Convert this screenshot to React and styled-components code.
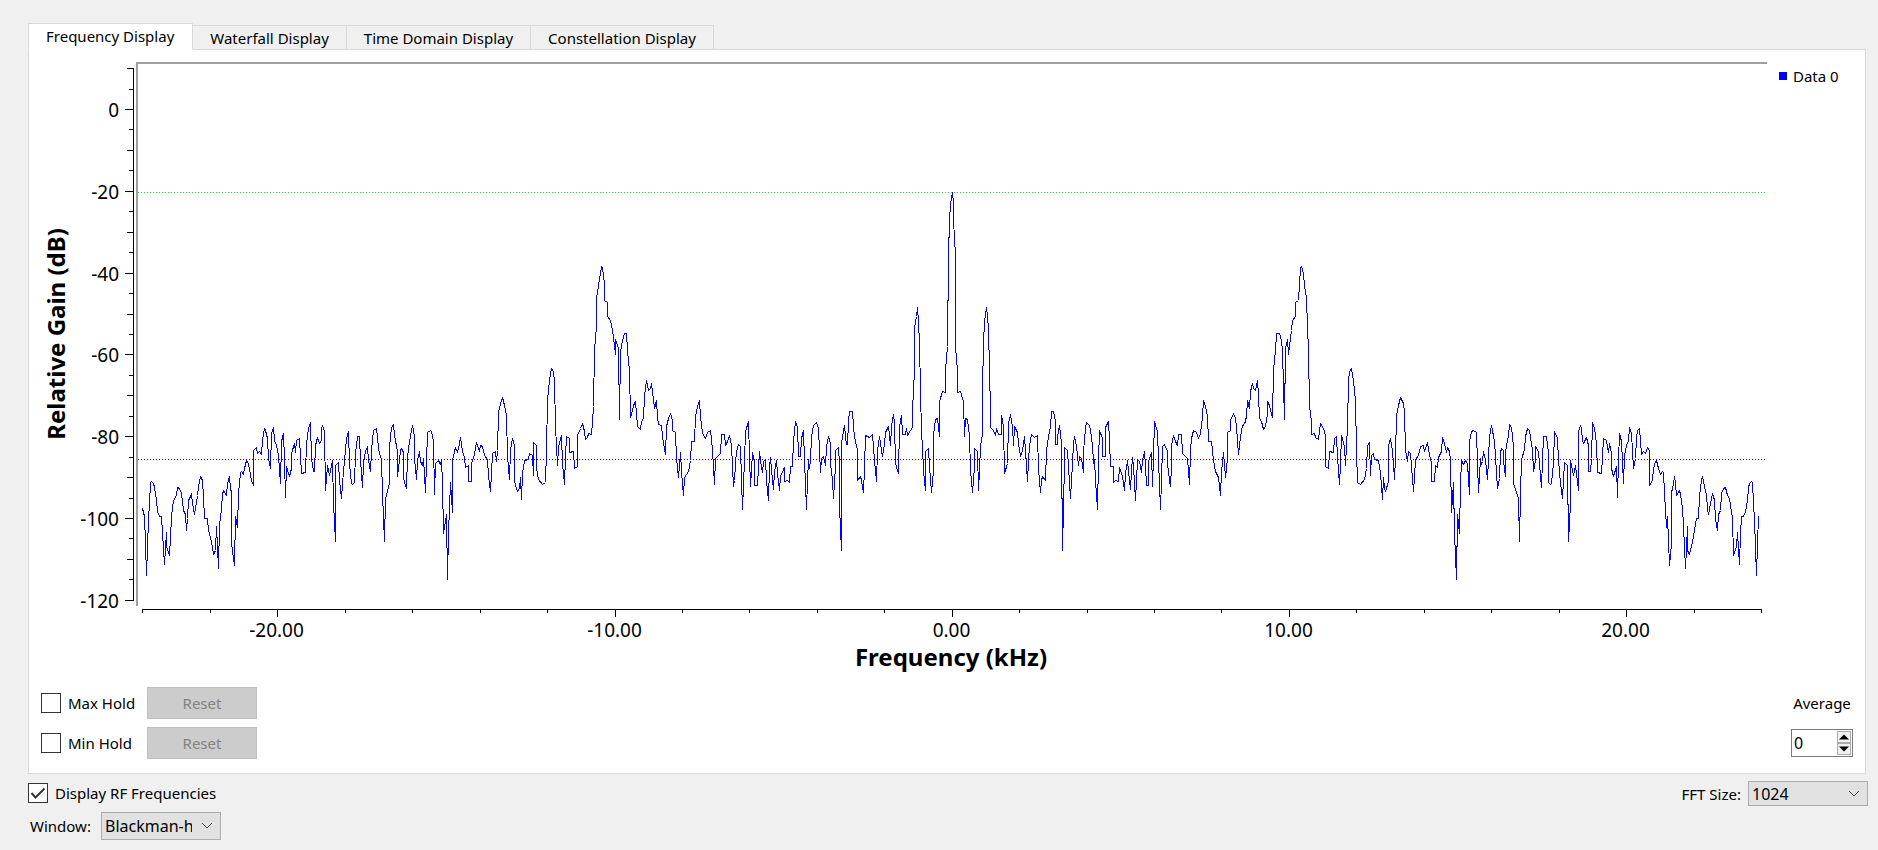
import { useState } from "react";
import styled, { createGlobalStyle } from "styled-components";

const TABS = [
  "Frequency Display",
  "Waterfall Display",
  "Time Domain Display",
  "Constellation Display",
];

const CENTER_X = 951.7;
const PX_PER_KHZ = 33.72;
const ZERO_Y = 109.5;
const PX_PER_DB = 4.09;
const UNIT = 3;

// negative half of the spectrum, in thirds of a pixel from each sweep's origin
const SWEEPS = [
  {
    x: 130,
    y: 400,
    points:
      "37,325 43,349 46,430 50,526 55,357 59,310 62,246 65,244 70,249 73,262 78,300 82,335 88,349 94,349 98,400 102,492 108,397 110,440 118,467 123,356 127,315 132,295 138,287 143,263 149,264 154,280 159,330 165,343 168,390 173,355 176,300 180,290 183,280 187,310 193,344 197,325 201,285 206,260 211,229 216,240 220,290 224,354 231,356 235,390 243,425 250,463 256,452 258,380 264,504 269,375 273,325 277,283 281,271 289,286 292,250 297,230 301,268 304,275 305,430 312,495 316,349 321,381 325,280 330,217 333,215 339,224 344,205 349,180 353,185 358,205 363,240 370,256 371,152 378,143 382,161 388,155 394,163 398,120 402,86 406,90 411,115 414,175 420,205 424,100 430,83 434,120 440,137 445,165 450,249 454,125 460,100 463,180 467,292 470,200 478,229 484,205 485,160 492,131 495,156 499,120 508,115 511,170 515,219 526,217 529,130 535,85 542,67 545,175 549,215 553,213 555,135 561,112 568,129 573,122 574,85 578,77 584,95 585,270 592,197 598,225 607,182 609,310 615,424 617,195 626,188 628,240 633,294 637,250 643,180 648,115 655,95 658,190 664,249 668,254 674,248 675,160 681,109 688,109 691,180 696,261 700,190 705,155 712,140 714,180 720,213 723,150 730,92 738,85 742,110 746,148 754,178 757,280 762,424 765,295 778,250 779,140 785,82 790,73 794,105 802,155 803,230 808,180",
  },
  {
    x: 400,
    y: 250,
    points:
      "0,600 5,595 9,608 11,685 18,714 22,620 27,575 36,527 42,560 43,625 48,688 53,630 58,604 61,635 67,646 69,625 75,726 81,548 90,541 95,545 100,575 102,733 106,640 114,630 120,642 124,630 127,700 131,850 138,793 141,988 145,850 150,698 156,787 158,630 162,604 166,592 171,606 177,580 181,562 186,605 193,622 196,652 204,645 206,695 214,693 215,640 222,612 228,577 237,605 240,586 247,590 254,615 262,628 265,680 270,723 277,609 285,604 288,635 292,600 295,488 300,460 307,443 313,465 320,495 322,620 327,688 332,600 337,565 343,585 344,695 352,723 357,715 360,682 363,747 368,670 374,630 385,627 388,609 396,615 399,675 401,577 408,585 410,655 416,687 428,702 436,697 439,600 443,450 449,390 454,355 460,365 464,395 467,530 473,645 476,590 484,557 487,640 492,702 497,620 499,560 507,566 508,607 521,605 524,655 532,650 533,555 540,535 547,521 552,545 555,569 562,562 566,549 574,553 576,515 580,470 583,300 588,230 590,145 596,105 600,70 604,49 608,55 612,100 614,152 622,157 623,200 631,212 636,240 642,285 645,312 647,267 654,295 657,507 661,305 666,270 672,250 679,250 683,300 688,360 692,503 697,480 700,465 706,455 708,490 712,530 720,539 724,515 730,505 733,435 738,390 744,422 750,415 753,401 758,425 762,475 768,452 771,500 776,523 783,525 787,560 795,614 799,530 804,505 810,491 817,510 818,540 826,547 828,625 834,683 840,607 845,665 849,736 853,683 864,665 870,630 875,575 883,574 887,500 893,470 898,452 901,500 907,550 915,565 921,548 930,542 935,565 938,600 942,702 946,625 956,615 962,610 965,553 973,553 976,587 983,573 989,557 995,587 996,650 999,709",
  },
  {
    x: 730,
    y: 400,
    points:
      "12,240 16,190 18,155 25,133 32,140 34,240 38,329 44,180 46,95 55,65 58,170 62,258 66,157 73,183 74,256 81,256 84,200 87,155 92,180 96,218 101,185 106,178 110,240 114,300 118,200 121,173 125,210 129,267 133,215 138,182 142,220 147,272 152,230 162,203 164,245 172,240 178,248 180,200 187,198 190,120 195,65 202,82 204,170 212,168 213,115 220,90 223,180 228,327 233,240 236,178 237,205 240,178 245,110 250,75 259,67 264,85 268,155 270,216 275,175 280,168 285,195 289,140 295,110 300,130 302,190 306,240 309,294 315,200 317,150 325,142 327,190 329,320 333,450 335,130 342,75 346,110 348,133 352,132 354,65 359,35 366,35 369,80 373,110 381,150 383,242 391,228 394,240 399,277 403,205 407,105 417,112 426,103 430,140 434,180 438,243 442,150 447,110 453,150 457,168 464,130 467,98 475,80 480,137 483,80 489,44 494,70 496,190 505,219 508,80 514,47 516,102 525,102 529,85 532,106 540,92",
  },
  {
    x: 880,
    y: 170,
    points:
      "97,773 98,720 102,600 104,475 108,440 111,412 115,455 119,520 122,660 123,790 128,830 131,900 135,960 137,843 145,835 147,890 153,968 159,900 161,795 167,748 172,745 177,800 179,695 187,664 196,668 197,600 202,530 204,255 208,150 210,100 216,67",
  },
];

const leftHalf = SWEEPS.flatMap((sweep) =>
  sweep.points.split(" ").map((pair) => {
    const [x, y] = pair.split(",").map(Number);
    return [sweep.x + x / UNIT, sweep.y + y / UNIT];
  })
);

const rightHalf = leftHalf
  .slice(1, -1)
  .reverse()
  .map(([x, y]) => [1903.2 - x, y]);

const trace = [...leftHalf, ...rightHalf]
  .map(([x, y]) => `${Math.floor(x) + 0.5},${Math.floor(y) + 0.5}`)
  .join(" ");

const yTicks = Array.from({ length: 27 }, (_, i) => 10 - i * 5);
const xTicks = Array.from({ length: 25 }, (_, i) => -24 + i * 2);
const xLabels = [-20, -10, 0, 10, 20];

const yPos = (db) => Math.round(ZERO_Y - db * PX_PER_DB - 0.5) + 0.5;
const xPos = (khz) => Math.round(CENTER_X + khz * PX_PER_KHZ) + 0.5;

const yTickLength = (db) => {
  if (db % 20 === 0) return 8;
  return db % 10 === 0 ? 6 : 4;
};

const SpectrumPlot = () => (
  <Plot viewBox="29 50 1741 626" role="img" aria-label="Spectrum">
    <Frame d="M136 62h1631v2H138v542h-2z" />
    <g shapeRendering="crispEdges">
      <Axis d="M133.5 68V601" />
      {yTicks.map((db) => (
        <Axis key={db} d={`M${133 - yTickLength(db)} ${yPos(db)}H134`} />
      ))}
      <Axis d="M142 609.5H1761" />
      {xTicks.map((khz) => (
        <Axis key={khz} d={`M${xPos(khz)} 609v${khz % 10 === 0 ? 8 : 4}`} />
      ))}
      <Level d="M138 192.5H1766" color="#00ff00" />
      <Level d="M138 459.5H1766" color="#800000" />
      <Trace points={trace} />
    </g>
    {yTicks
      .filter((db) => db % 20 === 0)
      .map((db) => (
        <TickLabel key={db} x="119" y={yPos(db) + 7} textAnchor="end">
          {db}
        </TickLabel>
      ))}
    {xLabels.map((khz) => (
      <TickLabel key={khz} x={xPos(khz) - 1} y="637" textAnchor="middle">
        {khz.toFixed(2)}
      </TickLabel>
    ))}
    <AxisTitle x="951" y="666">
      Frequency (kHz)
    </AxisTitle>
    <AxisTitle transform="translate(65 334) rotate(-90)">
      Relative Gain (dB)
    </AxisTitle>
  </Plot>
);

const CheckBox = ({ id, label, defaultChecked }) => {
  const [checked, setChecked] = useState(Boolean(defaultChecked));
  return (
    <CheckLabel htmlFor={id}>
      <CheckSlot>
        <CheckInput
          id={id}
          type="checkbox"
          checked={checked}
          onChange={() => {
            setChecked(!checked);
          }}
        />
        {checked && (
          <CheckMark viewBox="0 0 20 20">
            <path d="M3.5 10l4 4.5 9-9" />
          </CheckMark>
        )}
      </CheckSlot>
      {label}
    </CheckLabel>
  );
};

const Combo = ({ id, options, height }) => (
  <ComboSlot>
    <ComboSelect id={id} height={height}>
      {options.map((option) => (
        <option key={option}>{option}</option>
      ))}
    </ComboSelect>
    <Chevron viewBox="0 0 12 8">
      <path d="M1 1l5 5 5-5" />
    </Chevron>
  </ComboSlot>
);

const App = () => {
  const [activeTab, setActiveTab] = useState(TABS[0]);
  const [average, setAverage] = useState(0);

  return (
    <Page>
      <GlobalStyle />
      <TabBar role="tablist">
        {TABS.map((tab) => (
          <Tab
            key={tab}
            role="tab"
            aria-selected={tab === activeTab}
            $active={tab === activeTab}
            onClick={() => {
              setActiveTab(tab);
            }}
          >
            {tab}
          </Tab>
        ))}
      </TabBar>
      <Panel>
        <ChartRow>
          <SpectrumPlot />
          <Legend>
            <Swatch />
            Data 0
          </Legend>
        </ChartRow>
        <Controls>
          <HoldGrid>
            <CheckBox id="max-hold" label="Max Hold" />
            <ResetButton disabled>Reset</ResetButton>
            <CheckBox id="min-hold" label="Min Hold" />
            <ResetButton disabled>Reset</ResetButton>
          </HoldGrid>
          <AverageGrid>
            <label htmlFor="average">Average</label>
            <SpinBox>
              <SpinInput
                id="average"
                type="text"
                inputMode="numeric"
                value={average}
                onChange={(e) => {
                  setAverage(Number(e.target.value) || 0);
                }}
              />
              <SpinButtons>
                <SpinButton
                  aria-label="Increase"
                  onClick={() => {
                    setAverage(average + 1);
                  }}
                >
                  <Arrow viewBox="0 0 10 6">
                    <path d="M0 5.5L5 0.5L10 5.5z" />
                  </Arrow>
                </SpinButton>
                <SpinButton
                  aria-label="Decrease"
                  onClick={() => {
                    setAverage(Math.max(0, average - 1));
                  }}
                >
                  <Arrow viewBox="0 0 10 6">
                    <path d="M0 0.5L5 5.5L10 0.5z" />
                  </Arrow>
                </SpinButton>
              </SpinButtons>
            </SpinBox>
          </AverageGrid>
        </Controls>
      </Panel>
      <Footer>
        <FooterLeft>
          <CheckBox id="rf" label="Display RF Frequencies" defaultChecked />
          <WindowField>
            <label htmlFor="window">Window:</label>
            <Combo
              id="window"
              height="28px"
              options={["Blackman-harris", "Hamming", "Hann", "Rectangular"]}
            />
          </WindowField>
        </FooterLeft>
        <SizeField>
          <label htmlFor="fft-size">FFT Size:</label>
          <Combo
            id="fft-size"
            height="25px"
            options={["1024", "2048", "4096", "8192"]}
          />
        </SizeField>
      </Footer>
    </Page>
  );
};

const GlobalStyle = createGlobalStyle`
  * {
    box-sizing: border-box;
  }

  body {
    margin: 0;
    background: #f0f0f0;
    color: #000;
    font: 15px/20px "Noto Sans", "Open Sans", sans-serif;
  }

  button, input, select {
    margin: 0;
    font: inherit;
    color: inherit;
  }
`;

const Page = styled.main`
  min-height: 100vh;
  padding: 23px 10px 10px 28px;
`;

const TabBar = styled.div`
  display: flex;
  align-items: flex-end;
  height: 27px;
  margin-bottom: -1px;
`;

const Tab = styled.button`
  height: ${(props) => (props.$active ? "27px" : "25px")};
  padding: ${(props) => (props.$active ? "0 18px 2px 17px" : "0 17px")};
  border: 1px solid #d9d9d9;
  border-left-width: ${(props) => (props.$active ? "1px" : "0")};
  border-bottom-color: ${(props) => (props.$active ? "#fff" : "#d9d9d9")};
  background: ${(props) => (props.$active ? "#fff" : "#f0f0f0")};
  position: relative;
  white-space: nowrap;
`;

const Panel = styled.section`
  margin-right: 2px;
  border: 1px solid #d9d9d9;
  background: #fff;
`;

const ChartRow = styled.div`
  display: flex;
  align-items: flex-start;
`;

const Plot = styled.svg`
  display: block;
  flex: 1;
  min-width: 0;
`;

const Frame = styled.path`
  fill: #a0a0a0;
`;

const Axis = styled.path`
  fill: none;
  stroke: #000;
`;

const Level = styled.path`
  fill: none;
  stroke: ${(props) => props.color};
  stroke-dasharray: 1 2;
`;

const Trace = styled.polyline`
  fill: none;
  stroke: #0000ff;
  stroke-linejoin: round;
`;

const TickLabel = styled.text`
  font-size: 19px;
`;

const AxisTitle = styled.text`
  font-size: 24px;
  font-weight: 700;
  text-anchor: middle;
`;

const Legend = styled.div`
  display: flex;
  align-items: center;
  gap: 6px;
  width: 95px;
  padding: 16px 0 0 9px;
`;

const Swatch = styled.span`
  width: 8px;
  height: 8px;
  background: #0000ff;
`;

const Controls = styled.div`
  display: flex;
  justify-content: space-between;
  padding: 11px 12px 14px 12px;
`;

const HoldGrid = styled.div`
  display: grid;
  grid-template-columns: 106px 110px;
  grid-auto-rows: 32px;
  row-gap: 8px;
  align-items: center;
`;

const CheckLabel = styled.label`
  display: flex;
  align-items: center;
  gap: 7px;
  white-space: nowrap;
`;

const CheckSlot = styled.span`
  display: block;
  position: relative;
  width: 20px;
  height: 20px;
`;

const CheckInput = styled.input`
  display: block;
  appearance: none;
  width: 20px;
  height: 20px;
  border: 1px solid #333;
  background: #fff;
`;

const CheckMark = styled.svg`
  position: absolute;
  inset: 0;
  pointer-events: none;
  fill: none;
  stroke: #333;
  stroke-width: 2;
`;

const ResetButton = styled.button`
  height: 32px;
  padding: 0;
  border: 1px solid #bfbfbf;
  background: #ccc;
  color: #838383;
`;

const AverageGrid = styled.div`
  display: grid;
  grid-auto-rows: 32px;
  row-gap: 8px;
  align-items: center;
  justify-items: center;
`;

const SpinBox = styled.div`
  display: flex;
  width: 62px;
  height: 28px;
  padding: 1px;
  border: 1px solid #7a7a7a;
  background: #fff;
`;

const SpinInput = styled.input`
  flex: 1;
  min-width: 0;
  padding: 0 1px;
  border: 0;
  outline: 0;
  background: transparent;
  font-size: 16px;
`;

const SpinButtons = styled.div`
  display: flex;
  flex-direction: column;
  width: 14px;
`;

const SpinButton = styled.button`
  display: flex;
  align-items: center;
  justify-content: center;
  flex: 1;
  padding: 0;
  border: 1px solid #acacac;
  background: #f0f0f0;
`;

const Arrow = styled.svg`
  width: 10px;
  height: 6px;
`;

const Footer = styled.footer`
  display: flex;
  justify-content: space-between;
  align-items: flex-start;
  padding-top: 7px;
`;

const FooterLeft = styled.div`
  display: flex;
  flex-direction: column;
  gap: 9px;
  padding-top: 2px;
`;

const WindowField = styled.div`
  display: grid;
  grid-template-columns: 71px 120px;
  align-items: center;
  padding-left: 2px;
`;

const SizeField = styled.div`
  display: flex;
  align-items: center;
  gap: 7px;
`;

const ComboSlot = styled.div`
  position: relative;
  width: 120px;
`;

const ComboSelect = styled.select`
  display: block;
  appearance: none;
  width: 100%;
  height: ${(props) => props.height};
  padding: 0 28px 0 3px;
  border: 1px solid #acacac;
  border-radius: 0;
  background: #e1e1e1;
  font-size: 16px;
  text-overflow: clip;
`;

const Chevron = styled.svg`
  position: absolute;
  top: calc(50% - 4px);
  right: 8px;
  width: 12px;
  height: 8px;
  pointer-events: none;
  fill: none;
  stroke: #444;
`;

export default App;
